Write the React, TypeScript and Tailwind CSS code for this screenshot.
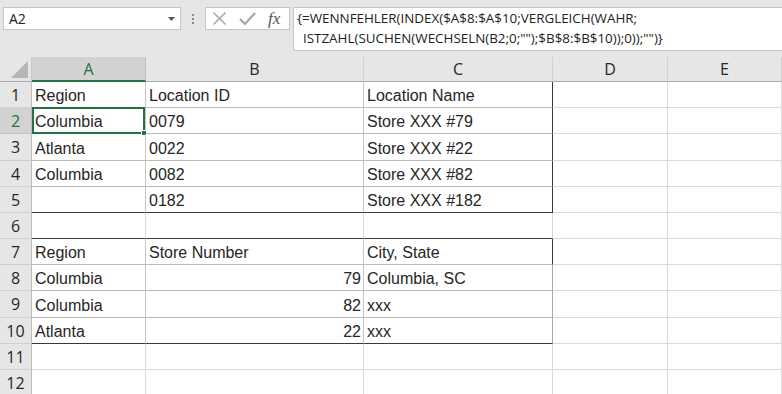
import React from "react";

type Cell = { v: string; right?: boolean };

const cols = [
  { w: "w-[114px]", label: "A" },
  { w: "w-[218px]", label: "B" },
  { w: "w-[189px]", label: "C" },
  { w: "w-[115px]", label: "D" },
  { w: "w-[114px]", label: "E" },
];

const rowH = ["h-[26px]", "h-[26px]", "h-[27px]", "h-[26px]", "h-[26px]", "h-[26px]", "h-[26px]", "h-[26px]", "h-[27px]", "h-[26px]", "h-[26px]", "h-[26px]"];

const data: Cell[][] = [
  [{ v: "Region" }, { v: "Location ID" }, { v: "Location Name" }],
  [{ v: "Columbia" }, { v: "0079" }, { v: "Store XXX #79" }],
  [{ v: "Atlanta" }, { v: "0022" }, { v: "Store XXX #22" }],
  [{ v: "Columbia" }, { v: "0082" }, { v: "Store XXX #82" }],
  [{ v: "" }, { v: "0182" }, { v: "Store XXX #182" }],
  [],
  [{ v: "Region" }, { v: "Store Number" }, { v: "City, State" }],
  [{ v: "Columbia" }, { v: "79", right: true }, { v: "Columbia, SC" }],
  [{ v: "Columbia" }, { v: "82", right: true }, { v: "xxx" }],
  [{ v: "Atlanta" }, { v: "22", right: true }, { v: "xxx" }],
  [],
  [],
];

function cellBorder(r: number, c: number): string {
  const row = r + 1;
  const inT1 = row >= 1 && row <= 5 && c <= 2;
  const inT2 = row >= 7 && row <= 10 && c <= 2;
  let bottom = "border-b-[#dadada]";
  let right = "border-r-[#dadada]";
  if (inT1 || inT2) {
    bottom = "border-b-[#bdbdbd]";
    right = "border-r-[#c4c4c4]";
    if (row === 5 || row === 10) bottom = "border-b-[#3a3a3a]";
    if (c === 2) {
      if (inT1 || row === 7) right = "border-r-[#3a3a3a]";
      else right = "border-r-[#a9a9a9]";
    }
  }
  if (row === 6 && c <= 2) bottom = "border-b-[#3a3a3a]";
  return `${bottom} ${right}`;
}

export default function App() {
  return (
    <div className="w-[782px] h-[394px] overflow-hidden bg-white font-['Liberation_Sans',Arial,sans-serif] text-[#262626]">
      {/* Toolbar */}
      <div className="h-[57px] bg-[#e6e6e6] flex items-start pt-[7px] pl-[3px]">
        <div className="w-[178px] h-[23px] bg-white border border-[#c6c6c6] flex items-center justify-between pl-[5px] pr-[5px]">
          <span className="text-[14px] font-['Open_Sans',sans-serif] text-[#222]">A2</span>
          <svg width="7" height="4" viewBox="0 0 7 4"><polygon points="0,0 7,0 3.5,4" fill="#555" /></svg>
        </div>
        <div className="w-[24px] h-[23px] flex flex-col items-center justify-center gap-[2px]">
          <div className="w-[2px] h-[2px] bg-[#8a8a8a]" />
          <div className="w-[2px] h-[2px] bg-[#8a8a8a]" />
          <div className="w-[2px] h-[2px] bg-[#8a8a8a]" />
        </div>
        <div className="w-[85px] h-[23px] bg-white border border-[#c6c6c6] flex items-center pl-[6px] gap-[12px]">
          <svg width="15" height="15" viewBox="0 0 15 15"><path d="M1.5 1.5 L13.5 13.5 M13.5 1.5 L1.5 13.5" stroke="#a6a6a6" strokeWidth="1.5" fill="none" /></svg>
          <svg width="17" height="15" viewBox="0 0 17 15"><path d="M1 8 L6 13 L16 2" stroke="#a6a6a6" strokeWidth="2.2" fill="none" /></svg>
          <span className="text-[17px] italic font-['Liberation_Serif',serif] text-[#555] leading-none">fx</span>
        </div>
        <div className="ml-[3px] flex-1 h-[44px] bg-white border border-[#c6c6c6] border-r-0 pl-[3px] pt-0 text-[13.4px] leading-[20px] font-['Open_Sans',sans-serif] text-[#222]">
          <div>{"{=WENNFEHLER(INDEX($A$8:$A$10;VERGLEICH(WAHR;"}</div>
          <div className="pl-[6px]">{'ISTZAHL(SUCHEN(WECHSELN(B2;0;"");$B$8:$B$10));0));"")}'}</div>
        </div>
      </div>

      {/* Column headers */}
      <div className="flex h-[25px]">
        <div className="w-[32px] h-[25px] bg-[#e6e6e6] border-b border-b-[#ababab] border-r border-r-[#c8c8c8] flex items-end justify-end pr-[3px] pb-[3px]">
          <svg width="17" height="17" viewBox="0 0 17 17"><polygon points="17,0 17,17 0,17" fill="#b6b6b6" /></svg>
        </div>
        {cols.map((c) =>
          c.label === "A" ? (
            <div key={c.label} className={`${c.w} h-[25px] bg-[#d2d2d2] border-b-2 border-b-[#217346] border-r border-r-[#bcbcbc] flex items-center justify-center text-[16px] font-['Open_Sans',sans-serif] text-[#217346]`}>
              {c.label}
            </div>
          ) : (
            <div key={c.label} className={`${c.w} h-[25px] bg-[#e6e6e6] border-b border-b-[#ababab] border-r border-r-[#d0d0d0] flex items-center justify-center text-[16px] font-['Open_Sans',sans-serif] text-[#262626]`}>
              {c.label}
            </div>
          )
        )}
      </div>

      {/* Rows */}
      {rowH.map((h, r) => (
        <div key={r} className={`flex ${h}`}>
          {r === 1 ? (
            <div className={`w-[32px] ${h} bg-[#d2d2d2] border-b border-b-[#c4c4c4] border-r border-r-[#bcbcbc] flex items-center justify-center text-[16px] font-['Open_Sans',sans-serif] text-[#217346]`}>
              {r + 1}
            </div>
          ) : (
            <div className={`w-[32px] ${h} bg-[#e6e6e6] border-b border-b-[#d0d0d0] border-r border-r-[#bcbcbc] flex items-center justify-center text-[16px] font-['Open_Sans',sans-serif] text-[#262626]`}>
              {r + 1}
            </div>
          )}
          {cols.map((c, ci) => {
            const cell = data[r][ci];
            return (
              <div
                key={ci}
                className={`${c.w} ${h} relative border-b border-r ${cellBorder(r, ci)} flex items-center pt-[3px] text-[16px] whitespace-nowrap ${cell && cell.right ? "justify-end pr-[2px]" : "pl-[3px]"}`}
              >
                {cell ? cell.v : ""}
                {r === 1 && ci === 0 && (
                  <div className="absolute -top-[1px] left-0 right-0 -bottom-[1px] border-2 border-[#217346]">
                    <div className="absolute -right-[4px] -bottom-[4px] w-[6px] h-[6px] bg-[#217346] border border-white" />
                  </div>
                )}
              </div>
            );
          })}
        </div>
      ))}
    </div>
  );
}
